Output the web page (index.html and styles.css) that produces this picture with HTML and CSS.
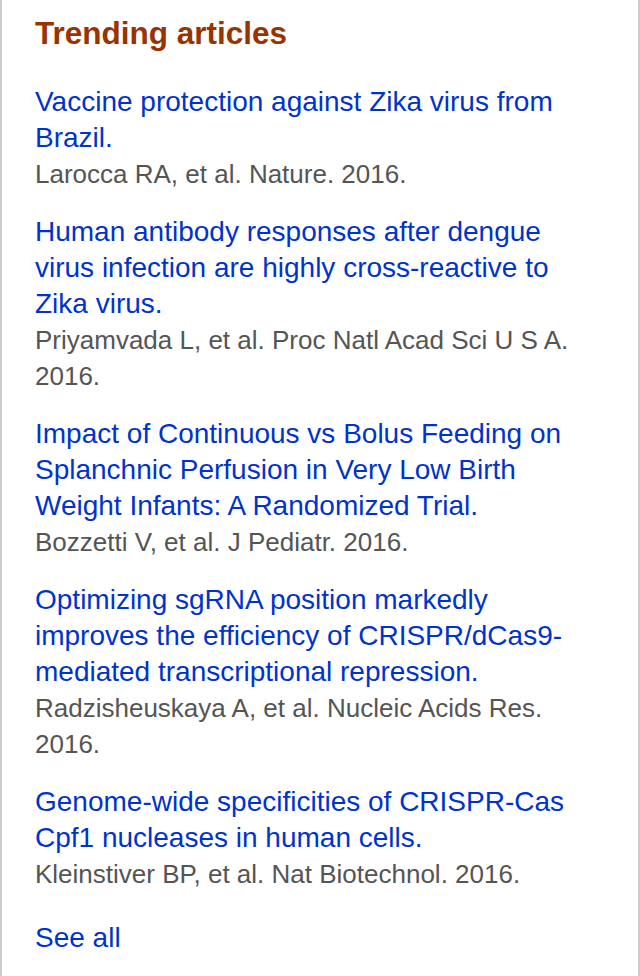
FILE: index.html
```html
<!DOCTYPE html>
<html lang="en">
<head>
<meta charset="utf-8">
<title>Trending articles</title>
<link rel="stylesheet" href="styles.css">
</head>
<body>
<section class="panel">
  <h2 class="panel-title">Trending articles</h2>
  <ul class="articles">
    <li class="article">
      <a class="article-title" href="#">Vaccine protection against Zika virus from Brazil.</a>
      <div class="article-meta">Larocca RA, et al. Nature. 2016.</div>
    </li>
    <li class="article">
      <a class="article-title" href="#">Human antibody responses after dengue virus infection are highly cross-reactive to Zika virus.</a>
      <div class="article-meta">Priyamvada L, et al. Proc Natl Acad Sci U S A. 2016.</div>
    </li>
    <li class="article">
      <a class="article-title" href="#">Impact of Continuous vs Bolus Feeding on Splanchnic Perfusion in Very Low Birth Weight Infants: A Randomized Trial.</a>
      <div class="article-meta">Bozzetti V, et al. J Pediatr. 2016.</div>
    </li>
    <li class="article">
      <a class="article-title" href="#">Optimizing sgRNA position markedly improves the efficiency of CRISPR/dCas9-mediated transcriptional repression.</a>
      <div class="article-meta">Radzisheuskaya A, et al. Nucleic Acids Res. 2016.</div>
    </li>
    <li class="article">
      <a class="article-title" href="#">Genome-wide specificities of CRISPR-Cas Cpf1 nucleases in human cells.</a>
      <div class="article-meta">Kleinstiver BP, et al. Nat Biotechnol. 2016.</div>
    </li>
  </ul>
  <a class="see-all" href="#">See all</a>
</section>
</body>
</html>
```

FILE: styles.css
```css
html, body {
  margin: 0;
  padding: 0;
  background: #ffffff;
}

body {
  font-family: "Liberation Sans", Arial, Helvetica, sans-serif;
}

.panel {
  box-sizing: border-box;
  min-height: 976px;
  border-left: 2px solid #cccccc;
  border-right: 2px solid #cccccc;
  padding: 15px 33px 0 33px;
}

.panel-title {
  margin: 0 0 33px 0;
  font-size: 31.5px;
  line-height: 36px;
  font-weight: bold;
  color: #993300;
}

.articles {
  list-style: none;
  margin: 0;
  padding: 0;
}

.article {
  margin: 0 0 22px 0;
}

.article-title {
  display: block;
  font-size: 28px;
  line-height: 36px;
  color: #0033cc;
  text-decoration: none;
}

.article-meta {
  font-size: 26px;
  line-height: 36px;
  color: #555555;
}

.see-all {
  display: inline-block;
  margin-top: 6px;
  font-size: 28px;
  line-height: 36px;
  color: #0033cc;
  text-decoration: none;
}
```
